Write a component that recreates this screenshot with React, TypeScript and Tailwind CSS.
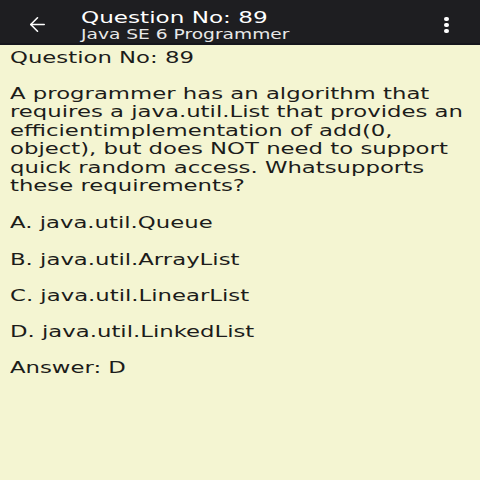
import { ArrowLeft } from 'lucide-react'

const options = [
  'A. java.util.Queue',
  'B. java.util.ArrayList',
  'C. java.util.LinearList',
  'D. java.util.LinkedList',
]

// the source screenshot is stretched sideways, so the text is widened with scale-x
export default function App() {
  return (
    <div className="w-[480px] h-[480px] overflow-hidden bg-[#f4f5d2] text-[#1c1c1a]" style={{ fontFamily: '"DejaVu Sans", sans-serif' }}>
      {/* toolbar */}
      <div className="h-[45px] bg-[#1e1e21] border-b-2 border-[#16161d] flex items-start text-white">
        <div className="w-[81px] pl-[26px] pt-[13px]">
          <ArrowLeft size={23} strokeWidth={1.7} />
        </div>
        <div className="flex-1 flex flex-col leading-none pt-[10px]">
          <span className="text-[16.5px] scale-x-[1.4] origin-left">Question No: 89</span>
          <span className="text-[13.5px] scale-x-[1.38] origin-left mt-[1px] text-[#e8e8e8]">Java SE 6 Programmer</span>
        </div>
        <div className="w-[58px] flex flex-col items-center gap-[2px] pr-[10px] pt-[17px]">
          <span className="w-[5px] h-[4px] rounded-full bg-white" />
          <span className="w-[5px] h-[4px] rounded-full bg-white" />
          <span className="w-[5px] h-[4px] rounded-full bg-white" />
        </div>
      </div>

      <div className="pl-[10px]">
        <div className="w-[340px] text-[16.5px] scale-x-[1.38] origin-left">
          <div className="leading-[22px] mt-[2px]">Question No: 89</div>
          <p className="leading-[18.4px] mt-[16px]">
            A programmer has an algorithm that requires a java.util.List that provides an efficientimplementation of add(0, object), but does NOT need to support quick random access. Whatsupports these requirements?
          </p>
          <div className="mt-[17px] flex flex-col gap-[14.2px]">
            {options.map((o) => (
              <div key={o} className="leading-[22px]">{o}</div>
            ))}
            <div className="leading-[22px]">Answer: D</div>
          </div>
        </div>
      </div>
    </div>
  )
}
